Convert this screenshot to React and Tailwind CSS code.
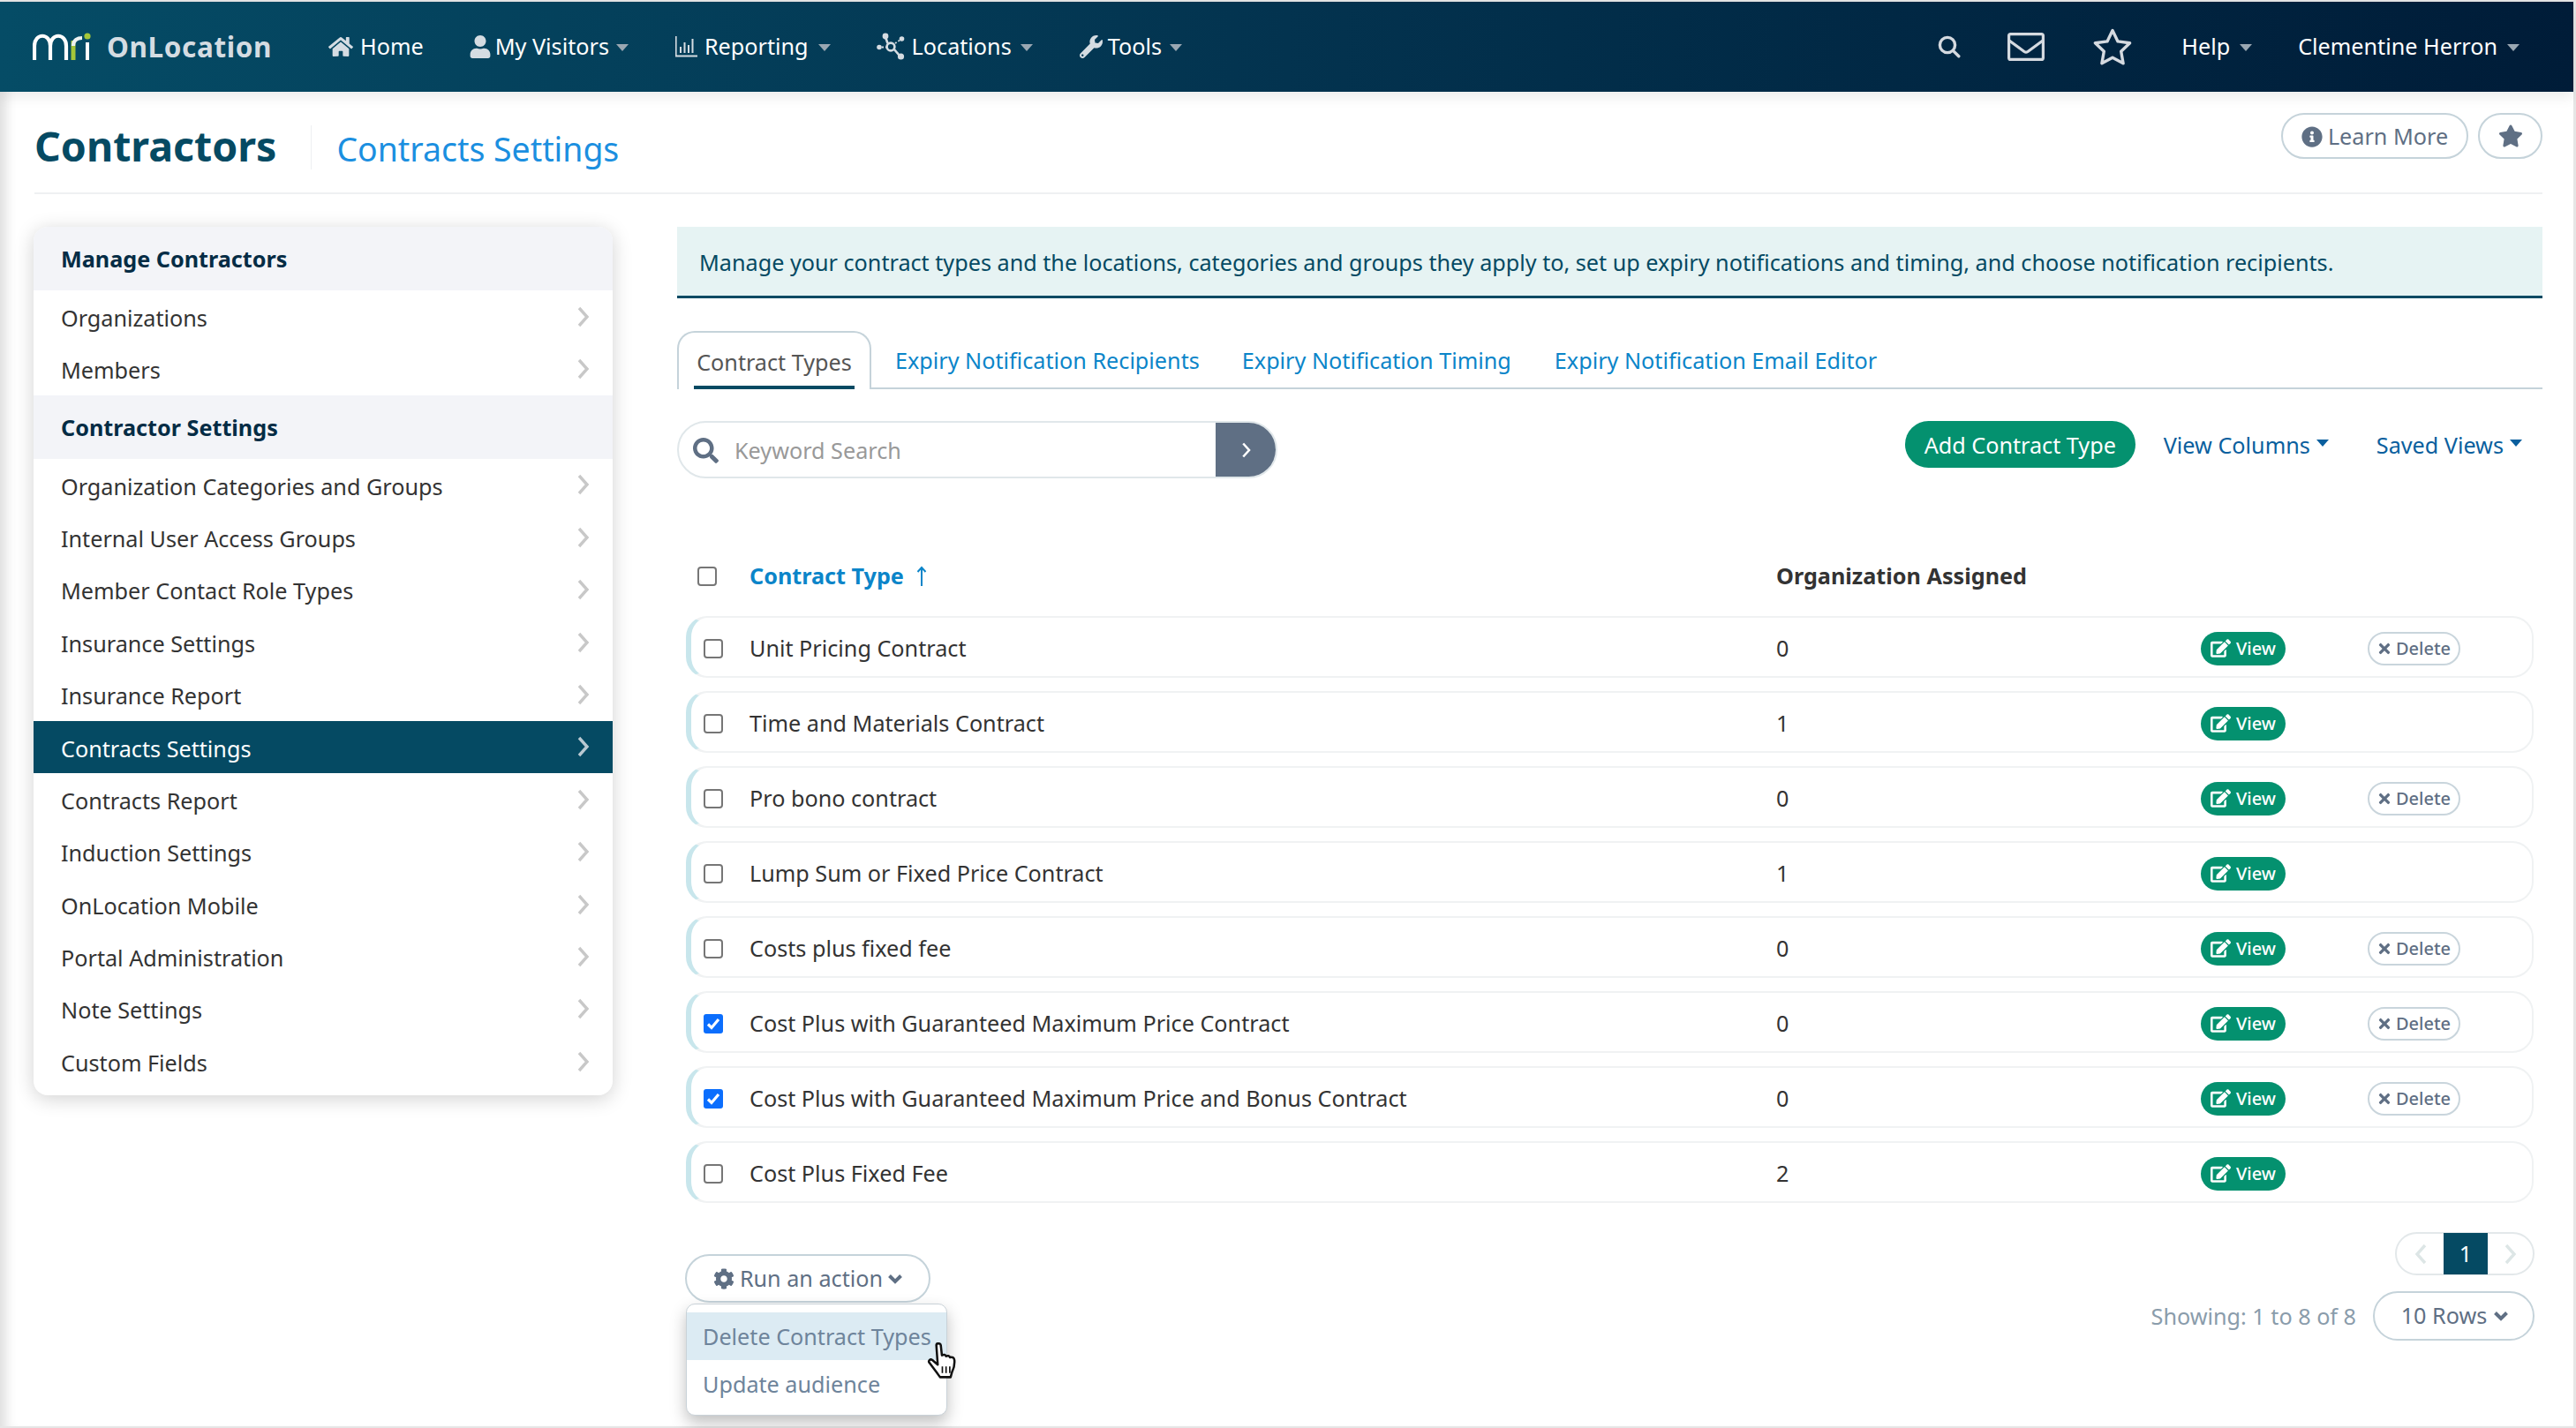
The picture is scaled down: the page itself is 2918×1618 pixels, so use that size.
import React from "react";
import { FaHome, FaUser, FaWrench, FaInfoCircle, FaStar, FaSearch, FaEdit, FaTimes, FaCog } from "react-icons/fa";

const Caret = ({ className = "" }) => (
  <span className={"inline-block w-0 h-0 border-l-[7px] border-r-[7px] border-t-[8px] border-l-transparent border-r-transparent border-t-[#9aa7b2] " + className} />
);

const BlueCaret = () => (
  <span className="inline-block w-0 h-0 border-l-[7px] border-r-[7px] border-t-[8px] border-l-transparent border-r-transparent border-t-[#0a5f9e] -translate-y-[2px]" />
);

const Chev = ({ className = "", left }) => (
  <svg width="14" height="24" viewBox="0 0 14 24" className={"shrink-0 " + className} fill="none" stroke="currentColor" strokeWidth="3.4">
    <path d={left ? "M12 2L3 12l9 10" : "M2 2l9 10-9 10"} />
  </svg>
);

const ChevDown = () => (
  <svg width="16" height="12" viewBox="0 0 16 12" className="shrink-0" fill="none" stroke="currentColor" strokeWidth="4">
    <path d="M1.5 2.5L8 9l6.5-6.5" />
  </svg>
);

const Logo = () => (
  <svg width="66" height="32" viewBox="0 0 66 32" className="shrink-0">
    <path d="M2 31V15c0-15 18-15 18 0v16M20 15c0-15 18-15 18 0v16" fill="none" stroke="#fff" strokeWidth="4.2" />
    <path d="M46 31V9" stroke="#a4c639" strokeWidth="5" />
    <path d="M46 15c0-7 5-9 10-9" fill="none" stroke="#eef2f2" strokeWidth="4.2" />
    <circle cx="62" cy="4" r="3.6" fill="#a4c639" />
    <path d="M62 11v20" stroke="#fff" strokeWidth="4" />
  </svg>
);

const ReportIcon = () => (
  <svg width="25" height="24" viewBox="0 0 25 24" className="shrink-0 text-[#d5dce2]" fill="currentColor">
    <rect x="0" y="0" width="1.6" height="23" />
    <rect x="0" y="21.5" width="25" height="2" />
    <rect x="5" y="12" width="2" height="7" />
    <rect x="9.5" y="7" width="2" height="12" />
    <rect x="14" y="10" width="2" height="9" />
    <rect x="18.5" y="3" width="2" height="16" />
  </svg>
);

const NetworkIcon = () => (
  <svg width="33" height="32" viewBox="0 0 33 32" className="shrink-0 text-[#d5dce2]">
    <g stroke="currentColor" strokeWidth="2.6" fill="none">
      <circle cx="16" cy="16" r="4.4" />
      <path d="M12.5 12L10 5M20 19l5.5 6.5" />
      <path d="M6 16.5h5M21 12l6-4" strokeDasharray="2 2" strokeWidth="1.8" />
    </g>
    <g fill="currentColor">
      <circle cx="10" cy="4" r="3.4" />
      <circle cx="27.5" cy="27" r="3.6" />
      <circle cx="3" cy="16.5" r="2.8" />
      <circle cx="28.5" cy="7" r="2.8" />
    </g>
  </svg>
);

const MailIcon = () => (
  <svg width="42" height="32" viewBox="0 0 42 32" className="shrink-0" fill="none" stroke="#d5dae0" strokeWidth="3.2" strokeLinejoin="round">
    <rect x="1.6" y="1.6" width="38.8" height="28.8" rx="2" />
    <path d="M2 9l17 12.5q2 1.2 4 0L40 9" />
  </svg>
);

const OutlineStar = () => (
  <svg width="44" height="42" viewBox="0 0 44 42" className="shrink-0" fill="none" stroke="#d5dae0" strokeWidth="3.4" strokeLinejoin="round">
    <path d="M22 2.5l6 12.4 13.6 1.9-9.9 9.5 2.4 13.5L22 33.3 9.9 39.8l2.4-13.5-9.9-9.5L16 14.9z" />
  </svg>
);

const SearchOutline = () => (
  <svg width="26" height="26" viewBox="0 0 26 26" className="shrink-0" fill="none" stroke="#d5dae0" strokeWidth="3.4" strokeLinecap="round">
    <circle cx="11" cy="11" r="8.6" />
    <path d="M17.6 17.6l6.2 6.2" />
  </svg>
);

const Hand = () => (
  <svg width="36" height="42" viewBox="0 0 34 40" className="absolute left-[1050px] top-[1521px] z-30">
    <path d="M10 3c0-2.5 4.5-2.5 4.8 0l1.2 11c2-1.2 4-.8 4.5 1 1.6-1 3.7-.6 4.2 1.2 2.5-1 4.6.4 4.8 3 .4 5-.6 9-2.5 12.5l-1.6 5.8H14l-4-5.5L2.5 22c-1.6-2 .8-4.6 3.2-3l5.8 5L10 3z" fill="#fff" stroke="#111" strokeWidth="2.4" strokeLinejoin="round" />
    <path d="M16.5 26v7M20.5 26v7M24.5 26v7" stroke="#111" strokeWidth="1.6" />
  </svg>
);

const Item = ({ children, label, caret, gap = "gap-[8px]", ml = "" }) => (
  <div className={"flex items-center " + gap + " " + ml}>
    {children}
    <span className="text-white text-[25.2px] leading-none">{label}</span>
    {caret && <Caret className="ml-[3px] mt-[2px]" />}
  </div>
);

const SideHead = ({ children }) => (
  <div className="h-[72px] flex items-center pl-[31px] pt-[2px] bg-[#f3f4f8] text-[25.2px] font-bold text-[#052c45]">{children}</div>
);

const SideItem = ({ children, active }) => (
  <div className={"h-[59.4px] flex items-center justify-between pl-[31px] pr-[26px] text-[25.2px] " + (active ? "bg-[#054a63] text-white" : "text-[#333]")}>
    <span className="pt-[4px]">{children}</span>
    <Chev className={active ? "text-[#b9c9d2]" : "text-[#c8c8c8]"} />
  </div>
);

const rows = [
  ["Unit Pricing Contract", "0", true, false],
  ["Time and Materials Contract", "1", false, false],
  ["Pro bono contract", "0", true, false],
  ["Lump Sum or Fixed Price Contract", "1", false, false],
  ["Costs plus fixed fee", "0", true, false],
  ["Cost Plus with Guaranteed Maximum Price Contract", "0", true, true],
  ["Cost Plus with Guaranteed Maximum Price and Bonus Contract", "0", true, true],
  ["Cost Plus Fixed Fee", "2", false, false],
];

const Check = ({ checked }) =>
  checked ? (
    <span className="w-[22px] h-[22px] rounded-[3px] bg-[#0b6efd] flex items-center justify-center shrink-0">
      <svg width="16" height="14" viewBox="0 0 16 14" fill="none" stroke="#fff" strokeWidth="3.2"><path d="M2 7.5l4 4 8-9.5" /></svg>
    </span>
  ) : (
    <span className="w-[22px] h-[22px] rounded-[4px] border-2 border-[#767676] bg-white shrink-0" />
  );

const Row = ({ name, count, del, checked }) => (
  <div className="h-[70px] flex items-center pt-[3px] border-2 border-l-[6px] border-[#f0f2f3] border-l-[#c8e6ec] rounded-[24px] text-[25.2px] text-[#333]">
    <div className="w-[66px] pl-[14px] flex items-center shrink-0"><Check checked={checked} /></div>
    <div className="w-[1163px] shrink-0">{name}</div>
    <div className="w-[481px] shrink-0">{count}</div>
    <div className="w-[189px] shrink-0">
      <span className="w-[96px] h-[38px] rounded-full bg-[#04916f] text-white text-[20px] font-medium flex items-center justify-center gap-[6px]">
        <FaEdit className="w-[23px] h-[21px]" />View
      </span>
    </div>
    {del && (
      <span className="w-[105px] h-[38px] rounded-full border-2 border-[#c9d5dc] text-[#5f6f84] text-[20px] font-medium flex items-center justify-center gap-[5px]">
        <FaTimes className="w-[16px] h-[18px]" />Delete
      </span>
    )}
  </div>
);

export default function App() {
  return (
    <div className="relative h-[1618px] w-[2918px] overflow-hidden bg-[#e6e6e6] font-['Noto_Sans',sans-serif] pt-[2px] pb-[2px] pr-[3px]">
      <Hand />
      <div className="h-full bg-white flex flex-col shadow-[inset_16px_0_14px_-10px_#dcdcdc]">
        <header className="h-[102px] shrink-0 flex items-center pl-[37px] pr-[61px] bg-gradient-to-r from-[#054c66] via-[#03334f] to-[#001c38] shadow-[0_6px_14px_rgba(0,0,0,0.08)]">
          <Logo />
          <span className="ml-[18px] text-[31.5px] font-bold text-[#d5dce2] tracking-[0.6px]">OnLocation</span>
          <Item label="Home" ml="ml-[64px]"><FaHome className="w-[28px] h-[26px] text-[#d5dce2]" /></Item>
          <Item label="My Visitors" caret ml="ml-[52px]" gap="gap-[5px]"><FaUser className="w-[24px] h-[26px] text-[#d5dce2]" /></Item>
          <Item label="Reporting" caret ml="ml-[53px]"><ReportIcon /></Item>
          <Item label="Locations" caret ml="ml-[52px]" gap="gap-[7px]"><NetworkIcon /></Item>
          <Item label="Tools" caret ml="ml-[53px]" gap="gap-[6px]"><FaWrench className="w-[26px] h-[26px] text-[#d5dce2]" /></Item>
          <div className="ml-auto flex items-center">
            <SearchOutline />
            <div className="ml-[53px]"><MailIcon /></div>
            <div className="ml-[55px]"><OutlineStar /></div>
            <Item label="Help" caret ml="ml-[56px]" />
            <Item label="Clementine Herron" caret ml="ml-[52px]" />
          </div>
        </header>

        <div className="ml-[39px] mr-[35px] h-[116px] shrink-0 border-b-2 border-[#eef0f2] flex items-start">
          <h1 className="mt-[31px] text-[46.5px] leading-[60px] font-bold text-[#054a63]">Contractors</h1>
          <div className="ml-[39px] mt-[38px] h-[50px] border-l border-[#eef0f2]" />
          <h2 className="ml-[28px] mt-[40px] text-[37.4px] leading-[50px] text-[#1b8fe0]">Contracts Settings</h2>
          <div className="ml-auto mt-[24px] flex gap-[11px] text-[25.2px] text-[#5f6f84]">
            <span className="h-[52px] w-[212px] rounded-full border-2 border-[#c5d3da] pt-[1px] flex items-center justify-center gap-[6px]">
              <FaInfoCircle className="w-[24px] h-[24px]" /><span className="pt-[1px]">Learn More</span>
            </span>
            <span className="h-[52px] w-[73px] rounded-full border-2 border-[#c5d3da] flex items-center justify-center">
              <FaStar className="w-[28px] h-[26px]" />
            </span>
          </div>
        </div>

        <div className="flex pl-[38px] pt-[37px]">
          <aside className="w-[656px] h-[984px] shrink-0 rounded-[16px] bg-white overflow-hidden shadow-[0_4px_22px_rgba(0,0,0,0.18)]">
            <SideHead>Manage Contractors</SideHead>
            <SideItem>Organizations</SideItem>
            <SideItem>Members</SideItem>
            <SideHead>Contractor Settings</SideHead>
            <SideItem>Organization Categories and Groups</SideItem>
            <SideItem>Internal User Access Groups</SideItem>
            <SideItem>Member Contact Role Types</SideItem>
            <SideItem>Insurance Settings</SideItem>
            <SideItem>Insurance Report</SideItem>
            <SideItem active>Contracts Settings</SideItem>
            <SideItem>Contracts Report</SideItem>
            <SideItem>Induction Settings</SideItem>
            <SideItem>OnLocation Mobile</SideItem>
            <SideItem>Portal Administration</SideItem>
            <SideItem>Note Settings</SideItem>
            <SideItem>Custom Fields</SideItem>
          </aside>

          <main className="ml-[73px] w-[2113px] shrink-0 flex flex-col">
            <div className="h-[81px] bg-[#e6f3f3] border-b-[3px] border-[#054a63] pl-[25px] pt-[3px] flex items-center text-[25.2px] text-[#054a63]">
              Manage your contract types and the locations, categories and groups they apply to, set up expiry notifications and timing, and choose notification recipients.
            </div>

            <div className="mt-[37px] h-[66px] flex items-stretch border-b-2 border-[#c5d3da] text-[25.2px] text-[#0b85c9]">
              <div className="relative -mb-[2px] w-[220px] border-2 border-b-0 border-[#c5d3da] rounded-t-[20px] bg-white flex items-center justify-center pt-[3px] text-[#555]">
                Contract Types
                <span className="absolute left-[17px] right-[17px] bottom-0 h-[4px] bg-[#054a63]" />
              </div>
              <span className="ml-[27px] pt-[4px] flex items-center">Expiry Notification Recipients</span>
              <span className="ml-[48px] pt-[4px] flex items-center">Expiry Notification Timing</span>
              <span className="ml-[49px] pt-[4px] flex items-center">Expiry Notification Email Editor</span>
            </div>

            <div className="mt-[36px] flex items-start">
              <div className="w-[680px] h-[65px] rounded-full border-2 border-[#e0e7ea] flex items-center justify-between overflow-hidden">
                <span className="flex items-center pl-[16px] gap-[18px] pt-[2px] text-[25.2px] text-[#999]">
                  <FaSearch className="w-[29px] h-[29px] text-[#5f6f84]" />Keyword Search
                </span>
                <span className="-mr-[2px] w-[70px] h-[65px] bg-[#5f6f84] flex items-center justify-center">
                  <Chev className="w-[12px] h-[18px] text-white" />
                </span>
              </div>
              <div className="ml-auto flex items-center h-[53px] pr-[23px] text-[25.2px] text-[#0a5f9e]">
                <span className="w-[261px] h-[53px] rounded-full bg-[#04916f] text-white pt-[2px] flex items-center justify-center">Add Contract Type</span>
                <span className="ml-[32px] pt-[2px] flex items-center gap-[7px]">View Columns<BlueCaret /></span>
                <span className="ml-[54px] pt-[2px] flex items-center gap-[7px]">Saved Views<BlueCaret /></span>
              </div>
            </div>

            <div className="mt-[78px] h-[66px] shrink-0 flex items-center text-[25.2px] font-bold pl-[23px]">
              <span className="w-[22px] h-[22px] rounded-[4px] border-2 border-[#767676] shrink-0" />
              <span className="ml-[37px] w-[1163px] text-[#0b85c9] flex items-center gap-[14px]">
                Contract Type
                <svg width="12" height="24" viewBox="0 0 12 24" fill="none" stroke="currentColor" strokeWidth="2"><path d="M6 23V2M1.5 7L6 2l4.5 5" /></svg>
              </span>
              <span className="text-[#333]">Organization Assigned</span>
            </div>

            <div className="mx-[10px] mt-[12px] flex flex-col gap-[15px]">
              {rows.map((r) => (
                <Row key={r[0]} name={r[0]} count={r[1]} del={r[2]} checked={r[3]} />
              ))}
            </div>

            <div className="mx-[9px] flex items-start justify-between">
              <div className="relative mt-[58px]">
                <span className="w-[278px] h-[55px] rounded-full border-2 border-[#c5d3da] pt-[1px] flex items-center justify-center gap-[6px] text-[25.2px] text-[#5f6f84]">
                  <FaCog className="w-[24px] h-[24px]" />Run an action<ChevDown />
                </span>
                <div className="absolute left-[1px] top-[56px] w-[296px] h-[127px] z-20 rounded-[10px] border border-[#c9d2d8] bg-white pt-[9px] shadow-[0_8px_18px_rgba(0,0,0,0.25)] text-[25.2px] text-[#6e849b]">
                  <div className="h-[54px] bg-[#dcebf3] pl-[18px] pt-[1px] flex items-center">Delete Contract Types</div>
                  <div className="h-[54px] pl-[18px] pt-[1px] flex items-center">Update audience</div>
                </div>
              </div>
              <div className="mt-[33px] flex flex-col items-end">
                <div className="w-[158px] h-[49px] rounded-full border-2 border-[#e3e8ea] flex items-center justify-between pl-[20px] pr-[18px]">
                  <Chev left className="text-[#dde6e6]" />
                  <span className="w-[50px] h-[47px] bg-[#054a63] text-white text-[25.2px] flex items-center justify-center">1</span>
                  <Chev className="text-[#dde6e6]" />
                </div>
                <div className="mt-[18px] flex items-center">
                  <span className="text-[25.2px] text-[#8a9cab] mr-[19px] pt-[1px]">Showing: 1 to 8 of 8</span>
                  <span className="w-[183px] h-[56px] rounded-full border-2 border-[#c5d3da] pl-[2px] flex items-center justify-center gap-[8px] text-[25.2px] text-[#5f6f84]">
                    10 Rows<ChevDown />
                  </span>
                </div>
              </div>
            </div>
          </main>
        </div>
      </div>
    </div>
  );
}
